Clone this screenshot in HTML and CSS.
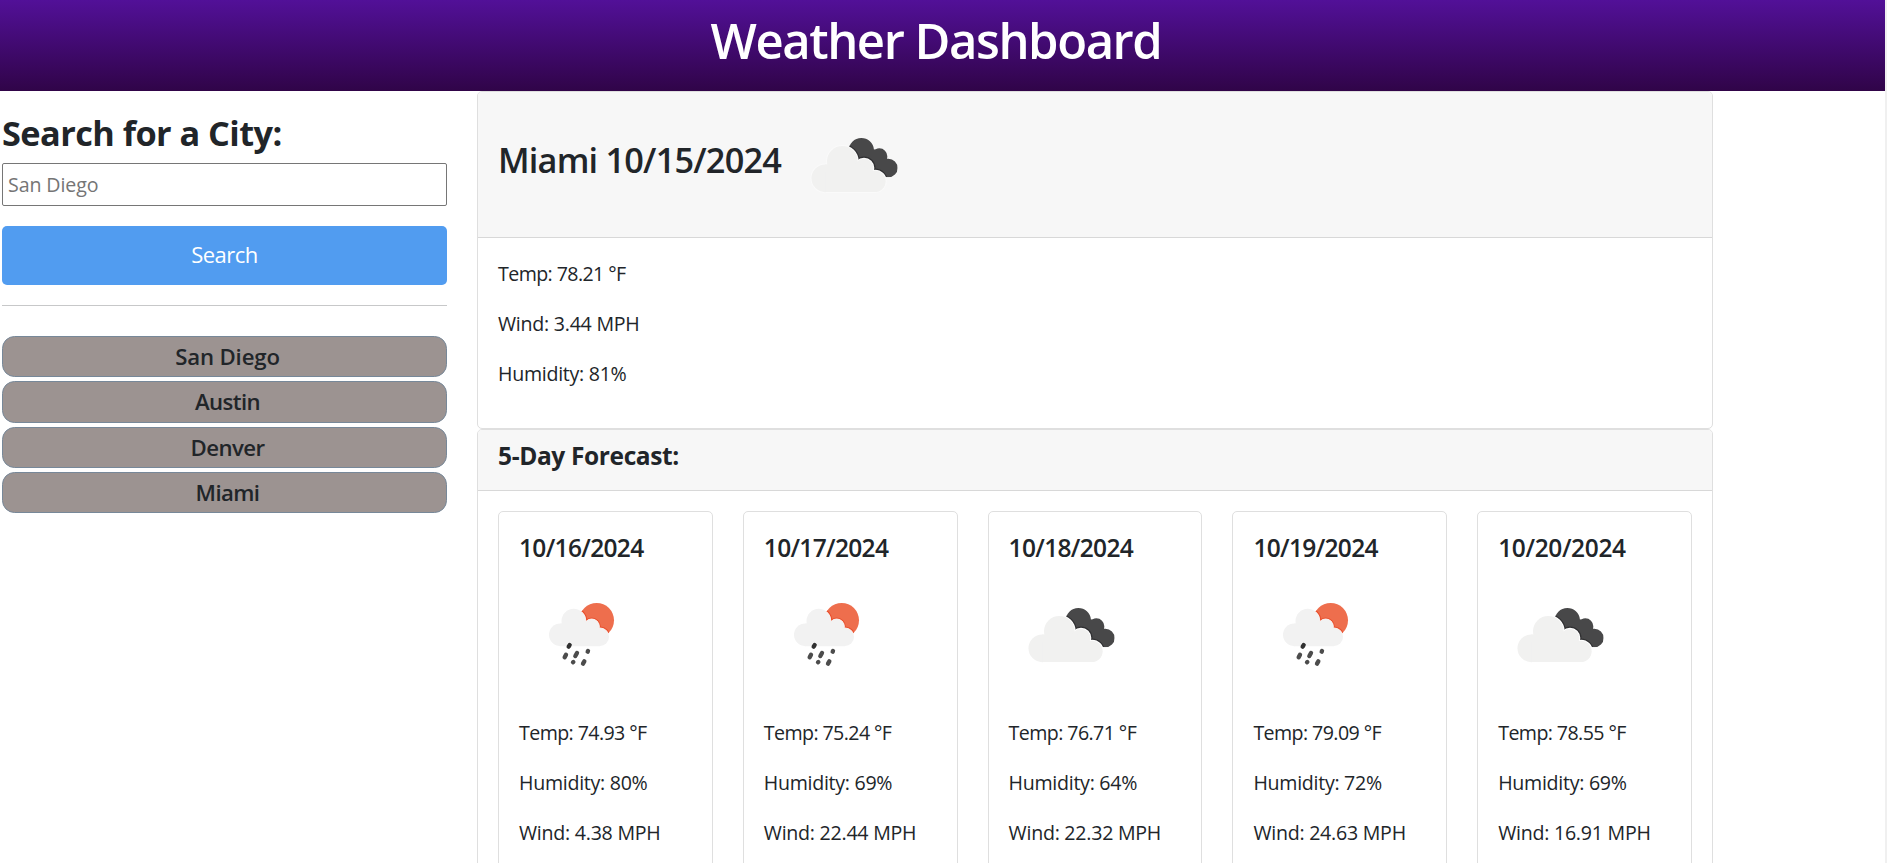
FILE: index.html
```html
<!DOCTYPE html>
<html lang="en"><head><meta charset="utf-8"><title>Weather Dashboard</title>
<link rel="stylesheet" href="styles.css"></head>
<body>
<svg class="defs" width="0" height="0">
<defs>
<g id="cloud-shape"><circle cx="216" cy="445" r="41.5"/><circle cx="267" cy="394" r="46"/><circle cx="332" cy="414" r="28"/><circle cx="365" cy="454" r="32"/><path d="M216 403.500H320L365 425V486H216Z"/></g>
<clipPath id="dark-clip"><circle cx="324" cy="362" r="38"/><circle cx="378" cy="379" r="24"/><circle cx="405" cy="414" r="28"/><path d="M330 365L375 356L405 414L380 430L330 400Z"/></clipPath>
<symbol id="clouds" viewBox="0 0 375 375"><g transform="translate(-116 -216)">
<g clip-path="url(#dark-clip)"><rect x="280" y="320" width="160" height="130" fill="#484849"/><use href="#cloud-shape" fill="#303032" stroke="#303032" stroke-width="13"/></g>
<use href="#cloud-shape" fill="var(--halo)" stroke="var(--halo)" stroke-width="6"/><use href="#cloud-shape" fill="#f1f1f0"/></g></symbol>
<g id="rain-cloud"><circle cx="91" cy="149.500" r="34"/><circle cx="131" cy="108" r="36.500"/><circle cx="185" cy="125" r="23"/><circle cx="210" cy="156" r="27"/><path d="M91 115.500H180L210 132V183.500H91Z"/></g>
<clipPath id="sun-clip"><circle cx="200" cy="106" r="52"/></clipPath>
<symbol id="rain" viewBox="0 0 375 375"><g transform="translate(33 39)">
<circle cx="200" cy="106" r="52" fill="#ee6e4d"/><use href="#rain-cloud" clip-path="url(#sun-clip)" stroke="#e9512f" fill="#e9512f" stroke-width="9"/>
<use href="#rain-cloud" clip-path="url(#sun-clip)" stroke="#fdeee9" fill="#fdeee9" stroke-width="3"/><use href="#rain-cloud" fill="#f2f2f2"/>
<g stroke="#4c4c4c" stroke-width="13" stroke-linecap="round"><path stroke="#303030" d="M119 180L116 185"/><path d="M108 209L104 217M141 204L136 213M174 198L173 200M130 231L129 232M163 229L159 236"/></g></g></symbol>
</defs></svg>
<header class="banner"><h1>Weather Dashboard</h1></header>
<main class="layout">
<aside class="sidebar">
<h3 class="search-title">Search for a City:</h3>
<input class="city-input" type="text" placeholder="San Diego">
<button class="search-button">Search</button>
<hr class="divider">
<ul class="history"><li class="wide">San Diego</li><li>Austin</li><li>Denver</li><li>Miami</li></ul>
</aside>
<section class="content">
<article class="card"><div class="card-header today"><h3>Miami 10/15/2024</h3><svg class="icon"><use href="#clouds"/></svg></div>
<div class="card-body"><p class="temp">Temp: 78.21 °F</p><p class="wind">Wind: 3.44 MPH</p><p>Humidity: 81%</p></div></article>
<article class="card"><div class="card-header"><h5 class="forecast-title">5-Day Forecast:</h5></div>
<div class="forecast">
<div class="card day"><h5>10/16/2024</h5><svg class="icon"><use href="#rain"/></svg><p class="temp">Temp: 74.93 °F</p><p>Humidity: 80%</p><p class="wind">Wind: 4.38 MPH</p></div>
<div class="card day"><h5>10/17/2024</h5><svg class="icon"><use href="#rain"/></svg><p class="temp">Temp: 75.24 °F</p><p>Humidity: 69%</p><p class="wind">Wind: 22.44 MPH</p></div>
<div class="card day"><h5>10/18/2024</h5><svg class="icon"><use href="#clouds"/></svg><p class="temp">Temp: 76.71 °F</p><p>Humidity: 64%</p><p class="wind">Wind: 22.32 MPH</p></div>
<div class="card day"><h5>10/19/2024</h5><svg class="icon"><use href="#rain"/></svg><p class="temp">Temp: 79.09 °F</p><p>Humidity: 72%</p><p class="wind">Wind: 24.63 MPH</p></div>
<div class="card day"><h5 class="wide">10/20/2024</h5><svg class="icon"><use href="#clouds"/></svg><p class="temp">Temp: 78.55 °F</p><p>Humidity: 69%</p><p class="wind">Wind: 16.91 MPH</p></div>
</div></article>
</section>
</main>
</body></html>
```

FILE: styles.css
```css
* { box-sizing: border-box; }
html { height: 100%; overflow: hidden; background: #f0f0f0; }
body { --halo: #fff; margin: 0 2px 0 0; height: 863px; overflow: hidden; background: #fff; color: #212529; font: 400 19.6px/30px "Open Sans", "Noto Sans", sans-serif; }
.defs { display: block; }
h1, h3, h5, p, ul { margin: 0; }
h1, h3, h5 { font-weight: 600; }
.banner { height: 91px; padding: 10px 13px 0 0; background: linear-gradient(#521098, #300448); color: #fff; text-align: center; }
.banner h1 { font-size: 49px; line-height: 60px; letter-spacing: -1.45px; }
.layout { display: grid; grid-template-columns: 445px 1236px; gap: 30px; padding-left: 2px; }
.sidebar { padding-top: 21px; }
.search-title { font-size: 34.3px; line-height: 42px; letter-spacing: -.55px; font-weight: 700; margin-bottom: 9px; }
.city-input { display: block; width: 100%; height: 43px; padding: 0 5px; border: 1px solid #767676; border-radius: 2px; font: inherit; letter-spacing: -.1px; }
.city-input::placeholder { color: #757575; }
.search-button { display: block; width: 100%; height: 59px; margin: 20px 0; padding: 0 0 4px; border: 0; border-radius: 5px; background: #519cf0; color: #fff; font: inherit; font-size: 22px; letter-spacing: -.5px; }
.divider { height: 1px; margin: 0 0 30px; border: 0; background: #c7c8c9; }
.history { display: grid; gap: 4px; padding: 0; list-style: none; }
.history li { height: 41.3px; padding: 6px 0 0 6px; border: 1px solid #778899; border-radius: 12.5px; background: #9c9391; font-size: 22.2px; line-height: 27px; letter-spacing: -.6px; font-weight: 600; text-align: center; }
.history .wide { letter-spacing: -.15px; }
.card { border: 1px solid #dfdfdf; border-radius: 5px; background: #fff; overflow: hidden; }
.card-header { padding: 10px 20px; background: #f7f7f7; border-bottom: 1px solid #d8d8d8; }
.today { --halo: #fafafa; display: flex; }
.today h3 { margin-top: 37px; width: 294px; font-size: 34.3px; line-height: 42px; letter-spacing: -.8px; white-space: nowrap; }
.icon { display: block; width: 125px; height: 125px; }
.card-body { padding: 20px 20px 0; }
p { margin-bottom: 20px; padding-top: 2px; line-height: 28px; letter-spacing: -.28px; white-space: nowrap; }
.temp { letter-spacing: -.58px; }
.wind { letter-spacing: -.25px; }
.card-body p:last-child { margin-bottom: 40px; }
h5 { padding-top: 2px; line-height: 28px; font-size: 24.5px; }
.forecast-title { margin-bottom: 10px; letter-spacing: -.37px; font-weight: 700; }
.forecast { display: grid; grid-template-columns: repeat(5, 1fr); gap: 30px; padding: 20px; }
.day { padding: 20px; }
.day h5 { margin-bottom: 10px; letter-spacing: -.67px; }
.day h5.wide { letter-spacing: -.37px; }
.day .icon { margin-bottom: 20px; }
```
